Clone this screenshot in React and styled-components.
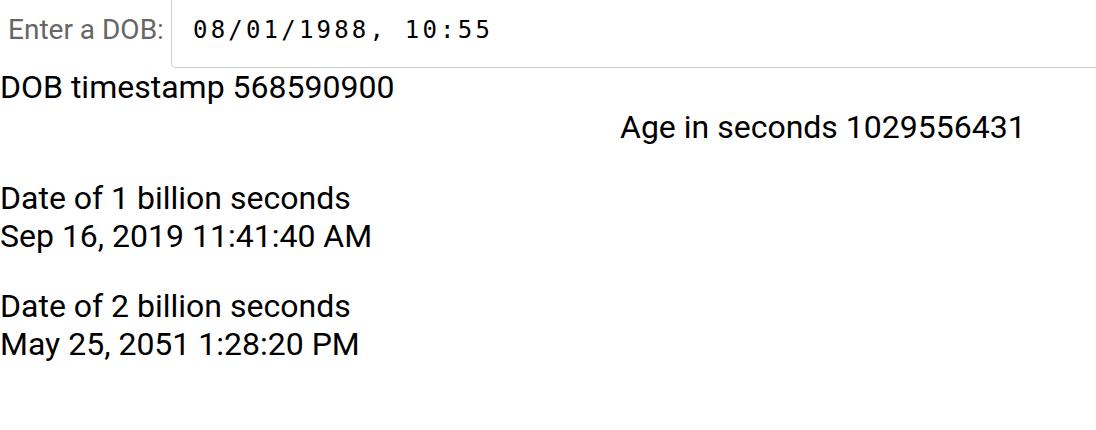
import React from "react";
import styled, { createGlobalStyle } from "styled-components";

const GlobalStyle = createGlobalStyle`
  html, body {
    margin: 0;
    padding: 0;
    background: #fff;
    overflow: hidden;
  }
  body {
    font-family: Roboto, "Liberation Sans", sans-serif;
    font-size: 32px;
    color: #000;
  }
`;

const Page = styled.div`
  width: 1096px;
  height: 430px;
  overflow: hidden;
`;

const Header = styled.div`
  display: flex;
  align-items: flex-start;
  height: 68px;
`;

const Label = styled.label`
  flex: none;
  width: 171px;
  box-sizing: border-box;
  padding: 13px 0 0 8px;
  font-size: 28px;
  color: #666;
  line-height: normal;
  white-space: nowrap;
`;

const DateBox = styled.div`
  flex: 1;
  box-sizing: border-box;
  margin-top: -20px;
  margin-right: -20px;
  height: 88px;
  border: 1px solid #ccc;
  border-radius: 5px;
  padding: 35px 0 0 21px;
  font-family: "DejaVu Sans Mono", "Liberation Mono", monospace;
  font-size: 24px;
  letter-spacing: 3.2px;
  color: #000;
  white-space: nowrap;
`;

const Line = styled.div`
  line-height: normal;
  margin-top: ${(p) => p.$top || 0}px;
  padding-left: ${(p) => p.$indent || 0}px;
  white-space: nowrap;
`;

const Block = styled.div`
  margin-top: ${(p) => p.$top}px;
`;

export default function App() {
  return (
    <Page>
      <GlobalStyle />
      <Header>
        <Label>Enter a DOB:</Label>
        <DateBox>08/01/1988, 10:55</DateBox>
      </Header>
      <Line>DOB timestamp 568590900</Line>
      <Line $top={2} $indent={620}>
        Age in seconds 1029556431
      </Line>
      <Block $top={33}>
        <Line>Date of 1 billion seconds</Line>
        <Line>Sep 16, 2019 11:41:40 AM</Line>
      </Block>
      <Block $top={32}>
        <Line>Date of 2 billion seconds</Line>
        <Line>May 25, 2051 1:28:20 PM</Line>
      </Block>
    </Page>
  );
}
